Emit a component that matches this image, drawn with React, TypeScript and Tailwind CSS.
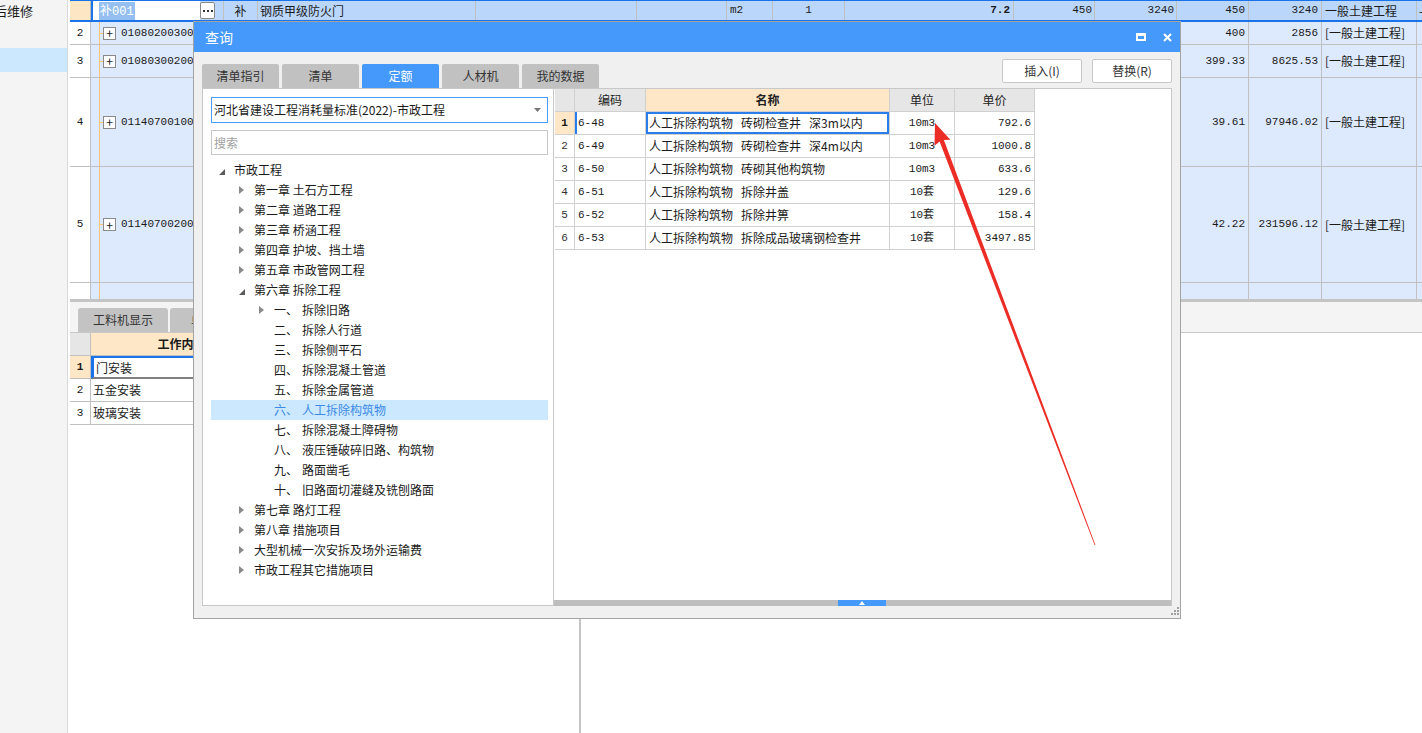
import React from "react";

// column widths of the main (background) grid, x from 70
const COLS = [
  "w-[21px]",
  "w-[133px]",
  "w-[34px]",
  "w-[218px]",
  "w-[161px]",
  "w-[90px]",
  "w-[46px]",
  "w-[72px]",
  "w-[169px]",
  "w-[81px]",
  "w-[82px]",
  "w-[72px]",
  "w-[73px]",
  "w-[95px]",
  "w-[60px]",
];

const MONO = "font-['Liberation_Mono','Noto_Sans_CJK_SC',monospace]";

const mainRows = [
  { no: "2", code: "010802003002", h: "h-[23px]", price: "400", total: "2856" },
  { no: "3", code: "010803002001", h: "h-[33px]", price: "399.33", total: "8625.53" },
  { no: "4", code: "011407001001", h: "h-[89px]", price: "39.61", total: "97946.02" },
  { no: "5", code: "011407002001", h: "h-[116px]", price: "42.22", total: "231596.12" },
];

type TreeItem = {
  level: number;
  icon?: "open" | "closed";
  num?: string;
  label: string;
  selected?: boolean;
};

const tree: TreeItem[] = [
  { level: 0, icon: "open", label: "市政工程" },
  { level: 1, icon: "closed", label: "第一章 土石方工程" },
  { level: 1, icon: "closed", label: "第二章 道路工程" },
  { level: 1, icon: "closed", label: "第三章 桥涵工程" },
  { level: 1, icon: "closed", label: "第四章 护坡、挡土墙" },
  { level: 1, icon: "closed", label: "第五章 市政管网工程" },
  { level: 1, icon: "open", label: "第六章 拆除工程" },
  { level: 2, icon: "closed", num: "一、", label: "拆除旧路" },
  { level: 2, num: "二、", label: "拆除人行道" },
  { level: 2, num: "三、", label: "拆除侧平石" },
  { level: 2, num: "四、", label: "拆除混凝土管道" },
  { level: 2, num: "五、", label: "拆除金属管道" },
  { level: 2, num: "六、", label: "人工拆除构筑物", selected: true },
  { level: 2, num: "七、", label: "拆除混凝土障碍物" },
  { level: 2, num: "八、", label: "液压锤破碎旧路、构筑物" },
  { level: 2, num: "九、", label: "路面凿毛" },
  { level: 2, num: "十、", label: "旧路面切灌缝及铣刨路面" },
  { level: 1, icon: "closed", label: "第七章 路灯工程" },
  { level: 1, icon: "closed", label: "第八章 措施项目" },
  { level: 1, icon: "closed", label: "大型机械一次安拆及场外运输费" },
  { level: 1, icon: "closed", label: "市政工程其它措施项目" },
];

const quotaRows = [
  ["6-48", "人工拆除构筑物 砖砌检查井 深3m以内", "10m3", "792.6"],
  ["6-49", "人工拆除构筑物 砖砌检查井 深4m以内", "10m3", "1000.8"],
  ["6-50", "人工拆除构筑物 砖砌其他构筑物", "10m3", "633.6"],
  ["6-51", "人工拆除构筑物 拆除井盖", "10套", "129.6"],
  ["6-52", "人工拆除构筑物 拆除井箅", "10套", "158.4"],
  ["6-53", "人工拆除构筑物 拆除成品玻璃钢检查井", "10套", "3497.85"],
];

const INDENT = ["pl-[8px]", "pl-[28px]", "pl-[48px]"];

function Sidebar() {
  return (
    <div className="w-[68px] shrink-0 bg-[#f4f4f4] border-r border-[#d8d8d8] flex flex-col overflow-hidden">
      <div className="h-[22px] flex items-center -ml-[6px] text-[13px] whitespace-nowrap">后维修</div>
      <div className="mt-[26px] h-[24px] bg-[#cce8ff]" />
    </div>
  );
}

function MainGrid() {
  return (
    <div className="h-[299px] shrink-0 flex flex-col overflow-hidden bg-[#dde9fc]">
      {/* row 1, being edited */}
      <div className="h-[22px] shrink-0 flex border-t border-b-2 border-[#1a73e8] bg-[#bad7fb]">
        <div className={`${COLS[0]} shrink-0 bg-[#fde6c3] border-r border-[#c0c0c0]`} />
        <div className={`${COLS[1]} shrink-0 flex items-center border-r border-[#c0c0c0]`}>
          <div className="w-[109px] h-full bg-white border-l-2 border-[#1a73e8] pl-[6px] flex items-center">
            <span className="bg-[#94bff0] text-white leading-[15px] px-px">
              补<span className={MONO}>001</span>
            </span>
          </div>
          <div className="w-[15px] h-[17px] shrink-0 bg-white border border-[#8a8a8a] rounded-[2px] flex items-center justify-center gap-[2px]">
            <div className="w-[2px] h-[2px] bg-[#333]" />
            <div className="w-[2px] h-[2px] bg-[#333]" />
            <div className="w-[2px] h-[2px] bg-[#333]" />
          </div>
        </div>
        <div className={`${COLS[2]} shrink-0 border-r border-[#c0c0c0] flex items-center justify-center`}>补</div>
        <div className={`${COLS[3]} shrink-0 border-r border-[#c0c0c0] flex items-center pl-[2px]`}>钢质甲级防火门</div>
        <div className={`${COLS[4]} shrink-0 border-r border-[#c0c0c0]`} />
        <div className={`${COLS[5]} shrink-0 border-r border-[#c0c0c0]`} />
        <div className={`${COLS[6]} shrink-0 border-r border-[#c0c0c0] flex items-center pl-[3px] ${MONO} text-[11px]`}>m2</div>
        <div className={`${COLS[7]} shrink-0 border-r border-[#c0c0c0] flex items-center justify-center ${MONO} text-[11px]`}>1</div>
        <div className={`${COLS[8]} shrink-0 border-r border-[#c0c0c0] flex items-center justify-end pr-[3px] ${MONO} text-[11px] font-bold`}>7.2</div>
        <div className={`${COLS[9]} shrink-0 border-r border-[#c0c0c0] flex items-center justify-end pr-[2px] ${MONO} text-[11px]`}>450</div>
        <div className={`${COLS[10]} shrink-0 border-r border-[#c0c0c0] flex items-center justify-end pr-[2px] ${MONO} text-[11px]`}>3240</div>
        <div className={`${COLS[11]} shrink-0 border-r border-[#c0c0c0] flex items-center justify-end pr-[3px] ${MONO} text-[11px]`}>450</div>
        <div className={`${COLS[12]} shrink-0 border-r border-[#c0c0c0] flex items-center justify-end pr-[3px] ${MONO} text-[11px]`}>3240</div>
        <div className={`${COLS[13]} shrink-0 border-r border-[#c0c0c0] flex items-center pl-[3px] whitespace-nowrap`}>一般土建工程</div>
        <div className={`${COLS[14]} shrink-0 flex items-center pl-[2px]`}>-</div>
      </div>

      {mainRows.map((r) => (
        <div key={r.no} className={`${r.h} shrink-0 flex border-b border-[#c0c0c0]`}>
          <div className={`${COLS[0]} shrink-0 bg-white border-r border-[#c0c0c0] flex items-center justify-center ${MONO} text-[11px]`}>
            {r.no}
          </div>
          <div className={`${COLS[1]} shrink-0 border-r border-[#c0c0c0] flex pl-[8px] overflow-hidden`}>
            <div className="w-px bg-[#f9c37a]" />
            <div className="flex items-center">
              <div className="w-[3px] h-px bg-[#f9c37a]" />
              <div className="w-[13px] h-[13px] bg-white border border-[#8a8a8a] flex items-center justify-center text-[12px] leading-none">
                +
              </div>
              <span className={`ml-[5px] ${MONO} text-[11px] whitespace-nowrap`}>{r.code}</span>
            </div>
          </div>
          {COLS.slice(2, 11).map((c, i) => (
            <div key={i} className={`${c} shrink-0 border-r border-[#c0c0c0]`} />
          ))}
          <div className={`${COLS[11]} shrink-0 border-r border-[#c0c0c0] flex items-center justify-end pr-[3px] ${MONO} text-[11px]`}>{r.price}</div>
          <div className={`${COLS[12]} shrink-0 border-r border-[#c0c0c0] flex items-center justify-end pr-[3px] ${MONO} text-[11px]`}>{r.total}</div>
          <div className={`${COLS[13]} shrink-0 border-r border-[#c0c0c0] flex items-center pl-[3px] whitespace-nowrap`}>[一般土建工程]</div>
          <div className={`${COLS[14]} shrink-0`} />
        </div>
      ))}

      <div className="flex-1 flex">
        <div className={`${COLS[0]} shrink-0 bg-white border-r border-[#c0c0c0]`} />
        <div className={`${COLS[1]} shrink-0 border-r border-[#c0c0c0] pl-[8px] flex`}>
          <div className="w-px bg-[#f9c37a]" />
        </div>
        {COLS.slice(2, 14).map((c, i) => (
          <div key={i} className={`${c} shrink-0 border-r border-[#c0c0c0]`} />
        ))}
      </div>
    </div>
  );
}

function LowerArea() {
  return (
    <div className="flex-1 flex flex-col min-h-0">
      <div className="h-[3px] bg-[#c4c4c4] shrink-0" />
      <div className="h-[31px] shrink-0 bg-[#f4f4f4] border-b border-[#c8c8c8] flex items-end pl-[8px] gap-[2px]">
        <div className="w-[90px] h-[24px] bg-[#c3c3c3] rounded-t-[3px] flex items-center justify-center text-[#333]">工料机显示</div>
        <div className="w-[90px] h-[24px] bg-[#c3c3c3] rounded-t-[3px] flex items-center justify-center text-[#333]">单价构成</div>
      </div>
      <div className="flex-1 flex">
        <div className="w-[511px] shrink-0 bg-white border-r-2 border-[#c4c4c4] flex flex-col">
          <div className="h-[23px] flex">
            <div className="w-[21px] bg-[#e6e6e6] border-r border-b border-[#c0c0c0]" />
            <div className="w-[182px] bg-[#fde7c7] border-r border-b border-[#c0c0c0] flex items-center justify-center font-bold">工作内容</div>
            <div className="flex-1 bg-[#e6e6e6] border-b border-[#c0c0c0]" />
          </div>
          {["门安装", "五金安装", "玻璃安装"].map((t, i) => (
            <div key={t} className="h-[23px] flex">
              <div
                className={`w-[21px] border-r border-b border-[#c0c0c0] flex items-center justify-center ${MONO} text-[11px] ${
                  i === 0 ? "bg-[#fde7c7] font-bold" : "bg-white"
                }`}
              >
                {i + 1}
              </div>
              <div
                className={`w-[182px] border-r border-b border-[#c0c0c0] flex items-center pl-[2px] ${
                  i === 0 ? "border-l-[3px] border-l-[#1a73e8] border-t-2 border-t-[#1a73e8] border-b-2 border-b-[#808080]" : ""
                }`}
              >
                {t}
              </div>
              <div className="flex-1 border-b border-[#c0c0c0]" />
            </div>
          ))}
        </div>
        <div className="flex-1 bg-white" />
      </div>
    </div>
  );
}

function TreeArrow({ kind }: { kind?: "open" | "closed" }) {
  if (kind === "open")
    return (
      <svg width="6" height="6" viewBox="0 0 6 6" className="mt-[3px]">
        <polygon points="6,0 6,6 0,6" fill="#5a5a5a" />
      </svg>
    );
  if (kind === "closed")
    return (
      <svg width="5" height="8" viewBox="0 0 5 8">
        <polygon points="0,0 5,4 0,8" fill="#8a8a8a" />
      </svg>
    );
  return null;
}

// names in the quota list use wide gaps between their parts
function QuotaName({ text }: { text: string }) {
  const parts = text.split(" ");
  return (
    <span className="flex gap-[8px] whitespace-nowrap">
      {parts.map((p, i) => (
        <span key={i}>{p}</span>
      ))}
    </span>
  );
}

function QueryDialog() {
  const tabs = ["清单指引", "清单", "定额", "人材机", "我的数据"];
  return (
    <div className="absolute left-[193px] top-[21px] w-[988px] h-[598px] border border-[#a3a3a3] bg-[#f0f0f0] flex flex-col">
      <div className="h-[30px] shrink-0 bg-[#4499fb] flex items-center pl-[11px] pr-[8px] text-white text-[14px]">
        <span>查询</span>
        <div className="ml-auto flex items-center gap-[17px]">
          <div className="w-[10px] h-[8px] border-2 border-t-[3px] border-white" />
          <svg width="9" height="9" viewBox="0 0 9 9">
            <path d="M1 1 L8 8 M8 1 L1 8" stroke="white" strokeWidth="2" />
          </svg>
        </div>
      </div>

      <div className="flex-1 flex flex-col px-[8px]">
        <div className="h-[36px] shrink-0 flex">
          <div className="mt-auto flex gap-[3px]">
            {tabs.map((t) => (
              <div
                key={t}
                className={`w-[77px] h-[24px] rounded-t-[2px] flex items-center justify-center ${
                  t === "定额" ? "bg-[#4499fb] text-white" : "bg-[#c1c1c1] text-[#333]"
                }`}
              >
                {t}
              </div>
            ))}
          </div>
          <div className="ml-auto mt-[7px] flex gap-[10px] self-start">
            <button className="w-[80px] h-[24px] bg-white border border-[#c8c8c8] rounded-[2px] text-[#333]">插入(I)</button>
            <button className="w-[80px] h-[24px] bg-white border border-[#c8c8c8] rounded-[2px] text-[#333]">替换(R)</button>
          </div>
        </div>

        <div className="h-[518px] shrink-0 flex">
          {/* left: library tree */}
          <div className="w-[352px] shrink-0 bg-white border border-[#c8c8c8] pl-[8px] pr-[5px] pt-[8px] flex flex-col">
            <div className="h-[26px] border border-[#4a9cf8] flex items-center pl-[2px] pr-[6px] text-[#1a1a1a]">
              <span className="whitespace-nowrap">河北省建设工程消耗量标准(2022)-市政工程</span>
              <svg width="7" height="4" viewBox="0 0 7 4" className="ml-auto">
                <polygon points="0,0 7,0 3.5,4" fill="#777" />
              </svg>
            </div>
            <input
              placeholder="搜索"
              className="mt-[7px] h-[25px] border border-[#c8c8c8] pl-[2px] outline-none placeholder:text-[#a0a0a0]"
            />
            <div className="mt-[5px] flex flex-col">
              {tree.map((it, i) => (
                <div
                  key={i}
                  className={`h-[20px] flex items-center ${INDENT[it.level]} ${
                    it.selected ? "bg-[#cce8ff] text-[#3c8ae4]" : "text-[#1a1a1a]"
                  }`}
                >
                  <div className="w-[15px] flex items-center shrink-0">
                    <TreeArrow kind={it.icon} />
                  </div>
                  {it.num && <span className="w-[28px] shrink-0">{it.num}</span>}
                  <span className="whitespace-nowrap">{it.label}</span>
                </div>
              ))}
            </div>
          </div>

          {/* right: quota list */}
          <div className="flex-1 bg-white border-t border-r border-[#c8c8c8] flex flex-col">
            <div className="flex-1 pl-px">
              <div className="flex h-[23px] text-[#222]">
                <div className="w-[20px] bg-[#e6e6e6] border-r border-b border-[#d0d0d0]" />
                <div className="w-[71px] bg-[#e6e6e6] border-r border-b border-[#d0d0d0] flex items-center justify-center">编码</div>
                <div className="w-[244px] bg-[#fde7c7] border-r border-b border-[#d0d0d0] flex items-center justify-center font-bold">名称</div>
                <div className="w-[65px] bg-[#e6e6e6] border-r border-b border-[#d0d0d0] flex items-center justify-center">单位</div>
                <div className="w-[80px] bg-[#e6e6e6] border-r border-b border-[#d0d0d0] flex items-center justify-center">单价</div>
              </div>
              {quotaRows.map((r, i) => (
                <div key={r[0]} className="flex h-[23px]">
                  <div
                    className={`w-[20px] border-r border-b border-[#d0d0d0] flex items-center justify-center ${MONO} text-[11px] ${
                      i === 0 ? "bg-[#fde7c7] font-bold" : "bg-white text-[#333]"
                    }`}
                  >
                    {i + 1}
                  </div>
                  <div
                    className={`w-[71px] border-r border-b border-[#d0d0d0] flex items-center pl-[3px] ${MONO} text-[11px] ${
                      i === 0 ? "shadow-[inset_2px_0_0_#2b7de9]" : ""
                    }`}
                  >
                    {r[0]}
                  </div>
                  <div
                    className={`w-[244px] border-r border-b border-[#d0d0d0] flex items-center pl-[3px] ${
                      i === 0 ? "shadow-[inset_0_0_0_2px_#2b7de9]" : ""
                    }`}
                  >
                    <QuotaName text={r[1]} />
                  </div>
                  <div className={`w-[65px] border-r border-b border-[#d0d0d0] flex items-center justify-center ${MONO} text-[11px]`}>
                    {r[2]}
                  </div>
                  <div className={`w-[80px] border-r border-b border-[#d0d0d0] flex items-center justify-end pr-[3px] ${MONO} text-[11px]`}>
                    {r[3]}
                  </div>
                </div>
              ))}
            </div>
            <div className="h-[6px] shrink-0 bg-[#bebebe] flex">
              <div className="w-[284px]" />
              <div className="w-[48px] bg-[#4499fb] flex items-center justify-center">
                <svg width="6" height="4" viewBox="0 0 6 4">
                  <polygon points="3,0 6,4 0,4" fill="white" />
                </svg>
              </div>
            </div>
          </div>
        </div>

        <div className="flex-1 flex justify-end items-end -mr-[7px] pb-[3px]">
          <svg width="8" height="8" viewBox="0 0 8 8">
            <rect x="6" y="0" width="2" height="2" fill="#a0a0a0" />
            <rect x="3" y="3" width="2" height="2" fill="#a0a0a0" />
            <rect x="6" y="3" width="2" height="2" fill="#a0a0a0" />
            <rect x="0" y="6" width="2" height="2" fill="#a0a0a0" />
            <rect x="3" y="6" width="2" height="2" fill="#a0a0a0" />
            <rect x="6" y="6" width="2" height="2" fill="#a0a0a0" />
          </svg>
        </div>
      </div>
    </div>
  );
}

function RedArrow() {
  return (
    <svg
      className="absolute left-0 top-0 pointer-events-none"
      width="1422"
      height="733"
      viewBox="0 0 1422 733"
    >
      <polygon
        points="935,123 950.4,139.7 943.9,140 1095.4,544.9 1094.6,545.1 939.6,141.6 934.5,145.7"
        fill="#ec2d26"
      />
    </svg>
  );
}

export default function App() {
  return (
    <div className="relative w-[1422px] h-[733px] overflow-hidden bg-white flex font-['Noto_Sans_CJK_SC',sans-serif] text-[12px] text-[#1a1a1a]">
      <Sidebar />
      <div className="ml-[2px] flex-1 min-w-0 flex flex-col overflow-hidden">
        <MainGrid />
        <LowerArea />
      </div>
      <QueryDialog />
      <RedArrow />
    </div>
  );
}
